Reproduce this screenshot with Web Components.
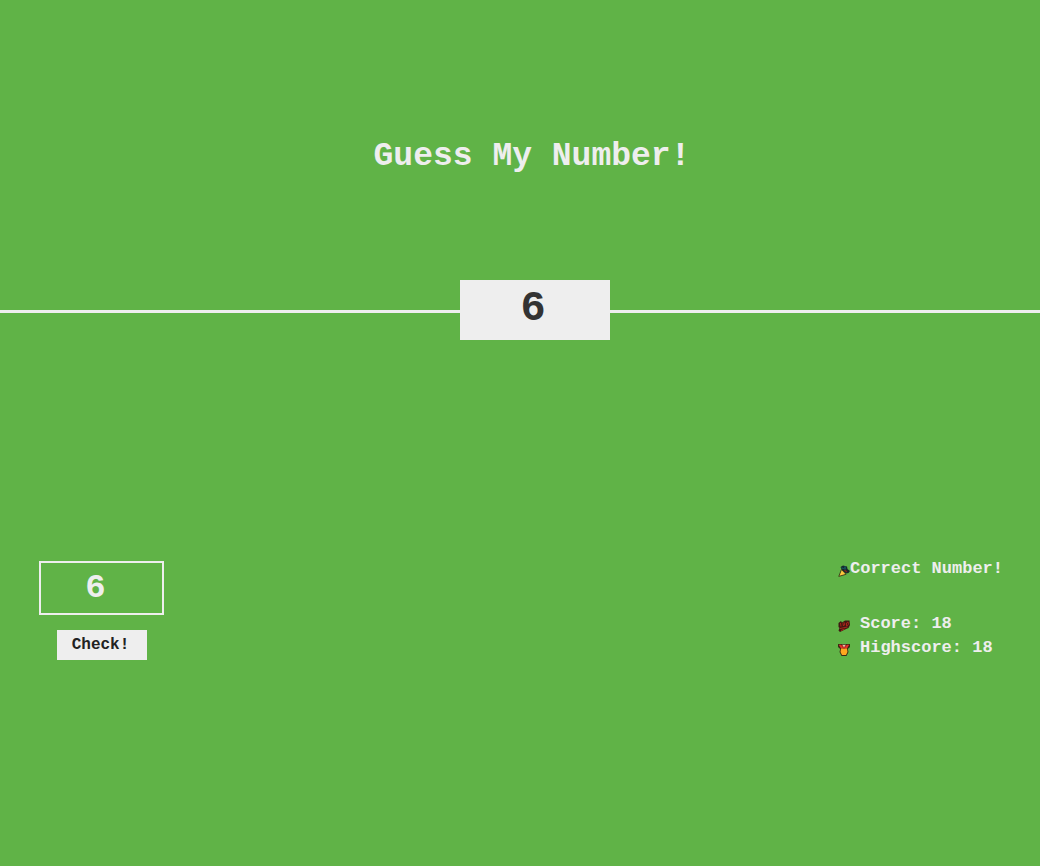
<!DOCTYPE html>
<html lang="en">
<head>
<meta charset="utf-8">
<title>Guess My Number!</title>
<style>
  body { margin: 0; min-height: 100vh; background: #60b347; color: #eee; font-family: "Liberation Mono", monospace; font-weight: 700; }
</style>
</head>
<body>
<guess-game></guess-game>
<script>
function define(name, html) {
  const template = document.createElement('template');
  template.innerHTML = html;
  customElements.define(name, class extends HTMLElement {
    constructor() {
      super();
      this.attachShadow({ mode: 'open' }).append(template.content.cloneNode(true));
    }
  });
}

define('game-header', `
  <style>
    :host { display: flex; position: relative; height: 313px; align-items: center; justify-content: center; border-bottom: 3px solid #eee; box-sizing: border-box; padding: 4px 0 0 24px; }
    h1 { margin: 0; font-size: 33px; line-height: 40px; white-space: nowrap; }
    .number { position: absolute; left: calc(50% - 60px); bottom: -30px; width: 150px; height: 60px; box-sizing: border-box; padding-right: 4px; background: #eee; color: #333; font-size: 42px; line-height: 58px; text-align: center; }
  </style>
  <h1><slot></slot></h1>
  <div class="number"><slot name="number"></slot></div>`);

define('guess-form', `
  <style>
    :host { display: flex; flex-direction: column; align-items: center; gap: 15px; width: 125px; }
    input { box-sizing: border-box; width: 100%; height: 54px; margin: 0; padding: 0 12px 0 0; border: 2px solid #eee; border-radius: 0; background: none; color: inherit; font: 700 34px "Liberation Mono", monospace; text-align: center; appearance: textfield; }
    input::-webkit-inner-spin-button { appearance: none; margin: 0; }
    button { width: 90px; height: 30px; padding: 0 2px 0 0; border: 0; background: #eee; color: #222; font: 700 16px "Liberation Mono", monospace; cursor: pointer; }
  </style>
  <input type="number" value="6" aria-label="Your guess">
  <button type="button">Check!</button>`);

define('score-line', `
  <style>
    :host { display: flex; align-items: center; height: 24px; font-size: 17px; line-height: 26px; white-space: nowrap; }
    ::slotted(svg) { flex: none; width: 12px; height: 12px; margin-top: 4px; }
    p { margin: 0; }
  </style>
  <slot name="icon"></slot><p><slot></slot></p>`);

define('guess-game', `
  <style>
    :host { display: block; }
    main { display: flex; justify-content: space-between; align-items: flex-start; padding: 248px 40px 40px 39px; }
    .results { width: 162px; margin-top: -4px; }
    .message { margin-bottom: 31px; }
    .stat span { margin-left: 10px; }
  </style>
  <game-header>Guess My Number!<span slot="number">6</span></game-header>
  <main>
    <guess-form></guess-form>
    <section class="results">
      <score-line class="message">
        <svg slot="icon" viewBox="0 0 12 12" aria-hidden="true">
          <path d="M2.5 2 5 .5 9 1.5 9.5 4 12 6 10.5 8 8 8.5 4 5Z" fill="#17282c"/>
          <path d="M.8 11.4 3.5 4.5 8 9.3Z" fill="#ffc83d" stroke="#2a2614" stroke-width=".8"/>
          <path d="M4 2.5 5.5 4M7 1.5v3" stroke="#127b84" stroke-width="1"/>
          <path d="M6.5 5 9 7" stroke="#7d241f" stroke-width="1.5"/>
        </svg><span>Correct Number!</span></score-line>
      <score-line class="stat">
        <svg slot="icon" viewBox="0 0 12 12" aria-hidden="true">
          <path d="M.5 3 3 1 4 2.5 7 .5 11.5 .5 12 5 10.5 8 7 9.5 2 12 .5 10.5 1.5 8 .5 7Z" fill="#401812"/>
          <path d="M2.5 3 3 6.5M5 3.5 6 2.5 7 4 5.5 6ZM8.5 3 10 2 10.5 4.5 8.5 6ZM2 8.5 9.5 7M3 10.5 6.5 9" fill="none" stroke="#a8251a" stroke-width="1"/>
        </svg><span>Score: 18</span></score-line>
      <score-line class="stat">
        <svg slot="icon" viewBox="0 0 12 12" aria-hidden="true">
          <path d="M0 0H12V3L9.8 5 10.5 8 8.5 12H3.5L1.5 8 2.2 5 0 3Z" fill="#3b2a14"/>
          <path d="M.8 .8H3.2L5.5 4.5H3ZM11.2 .8H8.8L6.5 4.5H9Z" fill="#e5322d"/>
          <path d="M4 .8H8L6 4Z" fill="#d9c9b0"/>
          <path d="M3 4.5H9L9.5 8 8 11H4L2.5 8Z" fill="#ffa81f"/>
          <path d="M4 1 6 4.5 8 1" fill="none" stroke="#d62f27" stroke-width="1"/>
        </svg><span>Highscore: 18</span></score-line>
    </section>
  </main>`);
</script>
</body>
</html>
